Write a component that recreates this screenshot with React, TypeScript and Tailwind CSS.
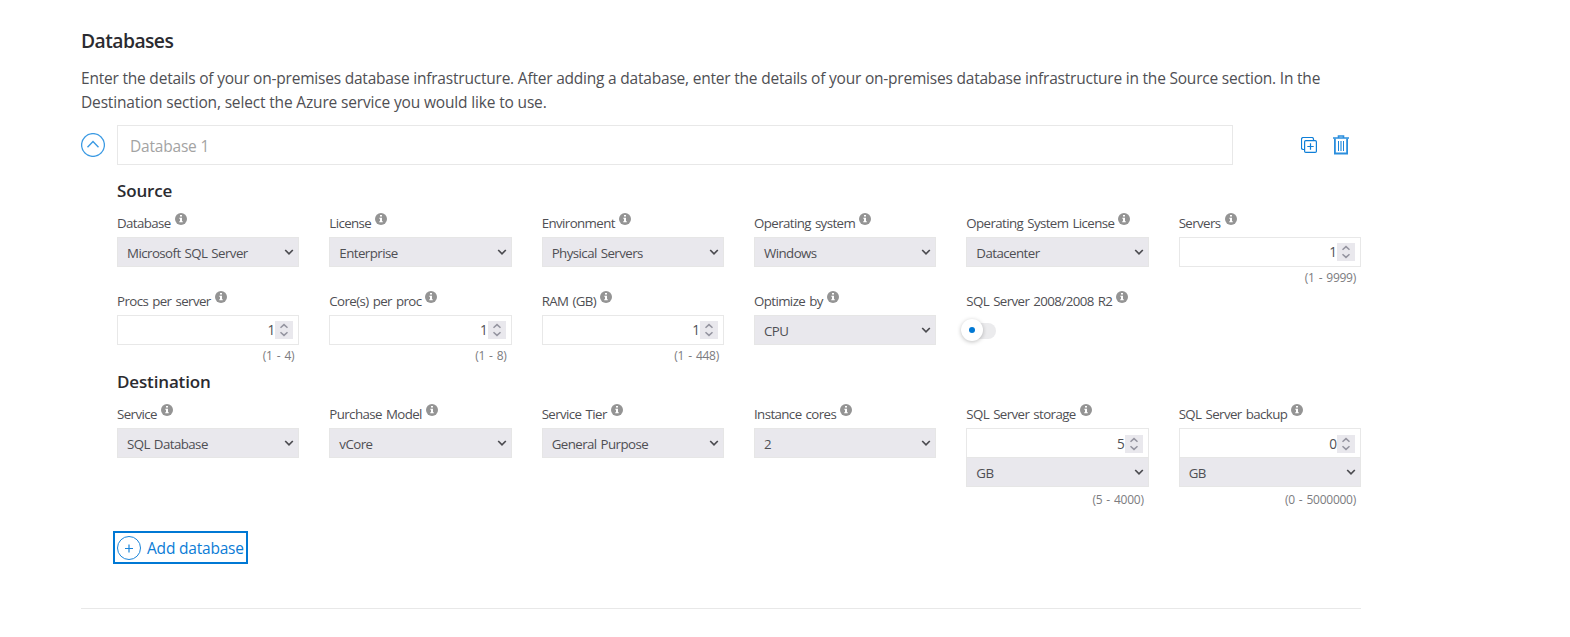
import type { ReactNode } from "react";

function InfoIcon() {
  return (
    <svg width="12" height="12" viewBox="0 0 12 12" className="ml-1 mt-[-1px] shrink-0">
      <circle cx="6" cy="6" r="6" fill="#949494" />
      <path d="M5 2h2v1.600H5zM4.300 4.700H7v3.500h.8v1.100H4.200V8.200H5V5.700h-.7z" fill="#fff" />
    </svg>
  );
}

function Field({ label, hint, attached, children }: { label: string; hint?: string; attached?: boolean; children: ReactNode }) {
  return (
    <div className="flex min-w-0 flex-col">
      <div className="flex h-[23px] items-start">
        <span className="whitespace-nowrap text-[13.3px] leading-[18px] tracking-[-0.6px] [word-spacing:1.2px]">{label}</span>
        <InfoIcon />
      </div>
      {children}
      <div
        className={`h-[25px] pr-[5px] text-right text-[12px] leading-[18px] tracking-[-0.26px] text-[#7c7c80] [word-spacing:1.2px] ${
          attached ? "pt-[4px]" : "pt-[2px]"
        }`}
      >
        {hint}
      </div>
    </div>
  );
}

function Select({ value }: { value: string }) {
  return (
    <div className="flex h-[30px] items-center justify-between border border-[#e6e6e6] bg-[#e9e8ed] pl-[9px] pr-1">
      <span className="pt-[2px] text-[13.3px] leading-[18px] tracking-[-0.56px] [word-spacing:1px]">{value}</span>
      <svg width="10" height="8" viewBox="0 0 10 8" fill="none">
        <path d="M1.200 2l3.800 3.800L8.800 2" stroke="#4b4b50" strokeWidth="1.700" />
      </svg>
    </div>
  );
}

function NumberInput({ value, attached }: { value: string; attached?: boolean }) {
  return (
    <div
      className={
        attached
          ? "flex h-[29px] items-center justify-end border border-b-0 border-[#e8e8e8] pr-[5px] pt-px"
          : "flex h-[30px] items-center justify-end border border-[#e8e8e8] pr-[5px]"
      }
    >
      <span className="text-[13.600px] leading-[18px]">{value}</span>
      <svg width="18" height="18" viewBox="0 0 18 18" fill="none" className="bg-[#e9e8ed]">
        <path d="M5.500 6.800L9 3.600l3.500 3.200M5.500 11.200L9 14.400l3.500-3.200" stroke="#94949f" strokeWidth="1.500" />
      </svg>
    </div>
  );
}

const headingClass = "text-[17px] font-semibold leading-6 tracking-[-0.15px] text-[#2b2b30]";
const gridClass = "grid w-[1244px] grid-cols-6 gap-x-[30px]";

export default function App() {
  return (
    <main className="h-[637px] w-full bg-white pl-[81px] pt-[27px] font-['Open_Sans',sans-serif] text-[#4f4f54]">
      <div className="h-[582px] w-[1280px] border-b border-[#e8e8e8]">
        <h2 className="h-[39px] text-[19.3px] font-semibold leading-7 tracking-[-0.55px] text-[#2b2b30]">Databases</h2>
        <p className="h-[59px] whitespace-nowrap text-[15.5px] leading-6 tracking-[-0.21px]">
          Enter the details of your on-premises database infrastructure. After adding a database, enter the details of
          your on-premises database infrastructure in the Source section. In the
          <br />
          <span className="tracking-[-0.16px]">Destination section, select the Azure service you would like to use.</span>
        </p>

        <div className="flex h-10 items-center">
          <svg width="24" height="24" viewBox="0 0 24 24" fill="none" stroke="#3b9ae3" className="shrink-0">
            <circle cx="12" cy="12" r="11.400" strokeWidth="1.300" />
            <path d="M6.500 14.200l5.500-5.700 5.500 5.700" strokeWidth="1.400" />
          </svg>
          <div className="ml-3 flex h-10 w-[1116px] shrink-0 items-center border border-[#e8e8e8] pl-3 pt-1 text-[15.5px] tracking-[-0.2px] text-[#a3a3a3]">
            Database 1
          </div>
          <svg width="16" height="16" viewBox="0 0 16 16" fill="none" stroke="#0f7fd8" className="ml-[68px] shrink-0">
            <path d="M3.500 12.500H2.200A1.700 1.700 0 0 1 .5 10.800V2.200A1.700 1.700 0 0 1 2.200.5h8.600a1.700 1.700 0 0 1 1.700 1.700v1.300" strokeWidth="1.200" />
            <rect x="3.600" y="3.600" width="11.800" height="11.800" rx="1.200" strokeWidth="1.200" />
            <path d="M9.500 6.300v6.400M6.300 9.500h6.400" strokeWidth="1.200" />
          </svg>
          <svg width="16" height="20" viewBox="0 0 16 20" fill="none" className="ml-4 shrink-0">
            <path d="M0 3h16M5.500 2.500V1h5v1.500" stroke="#2b8edd" strokeWidth="1.600" />
            <path d="M1.900 3.500v15h12.200v-15" stroke="#2b8edd" strokeWidth="1.800" />
            <path d="M5.500 6v10M10.500 6v10" stroke="#1a84d9" />
            <path d="M8 6v10" stroke="#7dbbec" strokeWidth="2" />
          </svg>
        </div>

        <section className="ml-9 pt-[14px]">
          <h3 className={`${headingClass} h-[35px]`}>Source</h3>
          <div className={gridClass}>
            <Field label="Database"><Select value="Microsoft SQL Server" /></Field>
            <Field label="License"><Select value="Enterprise" /></Field>
            <Field label="Environment"><Select value="Physical Servers" /></Field>
            <Field label="Operating system"><Select value="Windows" /></Field>
            <Field label="Operating System License"><Select value="Datacenter" /></Field>
            <Field label="Servers" hint="(1 - 9999)"><NumberInput value="1" /></Field>
            <Field label="Procs per server" hint="(1 - 4)"><NumberInput value="1" /></Field>
            <Field label="Core(s) per proc" hint="(1 - 8)"><NumberInput value="1" /></Field>
            <Field label="RAM (GB)" hint="(1 - 448)"><NumberInput value="1" /></Field>
            <Field label="Optimize by"><Select value="CPU" /></Field>
            <Field label="SQL Server 2008/2008 R2">
              <div className="flex h-[30px] items-center pt-px">
                <div className="ml-[-5px] flex h-4 w-[35px] items-center rounded-full bg-[#ebebed]">
                  <div className="mt-[-1px] flex size-[22px] shrink-0 items-center justify-center rounded-full bg-white shadow-[0_1px_4px_rgba(0,0,0,0.25)]">
                    <div className="size-[6px] rounded-full bg-[#0078d4]" />
                  </div>
                </div>
              </div>
            </Field>
          </div>

          <h3 className={`${headingClass} h-[35px]`}>Destination</h3>
          <div className={gridClass}>
            <Field label="Service"><Select value="SQL Database" /></Field>
            <Field label="Purchase Model"><Select value="vCore" /></Field>
            <Field label="Service Tier"><Select value="General Purpose" /></Field>
            <Field label="Instance cores"><Select value="2" /></Field>
            <Field label="SQL Server storage" hint="(5 - 4000)" attached>
              <NumberInput value="5" attached />
              <Select value="GB" />
            </Field>
            <Field label="SQL Server backup" hint="(0 - 5000000)" attached>
              <NumberInput value="0" attached />
              <Select value="GB" />
            </Field>
          </div>

          <button className="ml-[-4px] mt-[19px] flex h-[33px] w-[135px] items-center border-2 border-[#0078d4] pl-[2px] text-[#0b7cd6]">
            <svg width="24" height="24" viewBox="0 0 24 24" fill="none" stroke="#1a84d9" className="shrink-0">
              <circle cx="12" cy="12" r="11.500" />
              <path d="M8 12.500h8M12 8.500v8" strokeWidth="1.200" />
            </svg>
            <span className="ml-1.5 whitespace-nowrap text-[15.5px] leading-6 tracking-[-0.2px]">Add database</span>
          </button>
        </section>
      </div>
    </main>
  );
}
